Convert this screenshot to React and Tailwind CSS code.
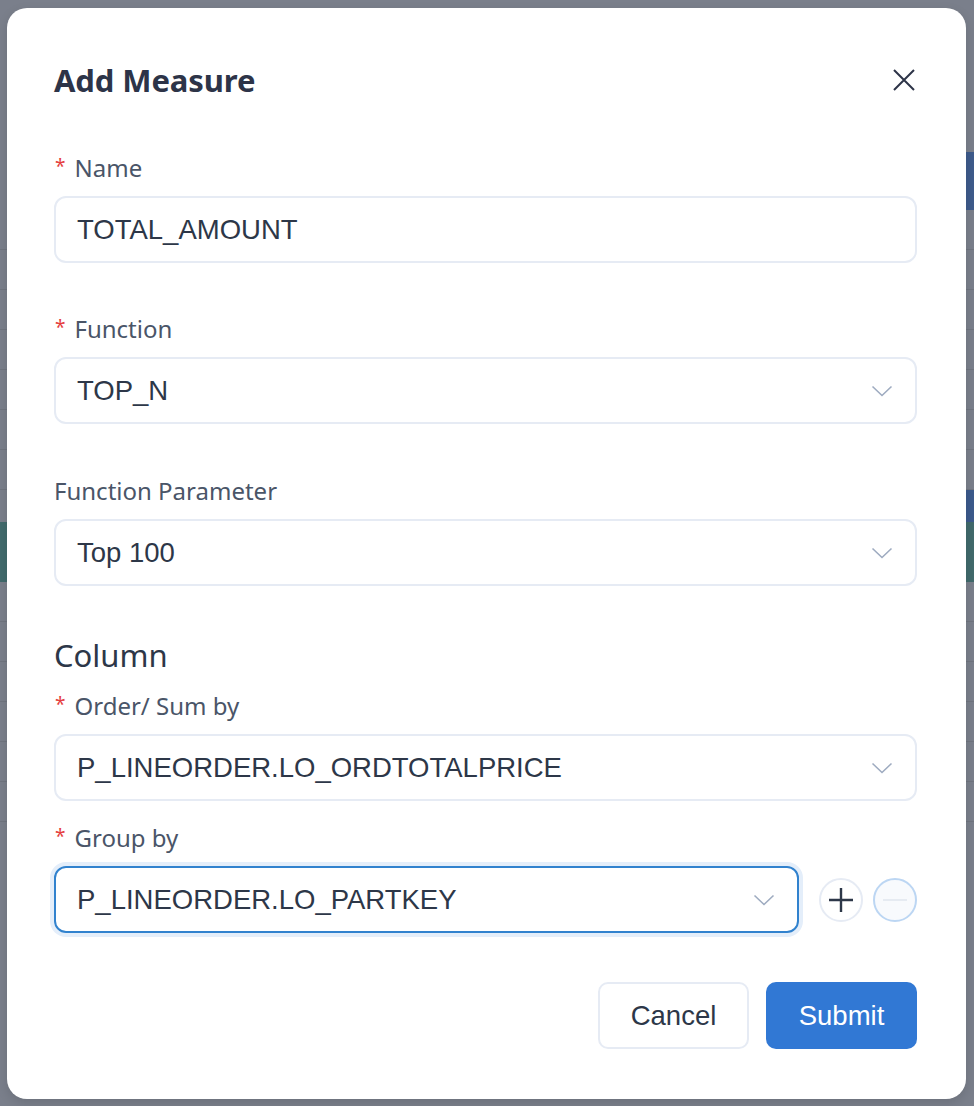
import React from "react";

const sans = { fontFamily: '"Noto Sans", "Open Sans", sans-serif' };
const arial = { fontFamily: '"Liberation Sans", Arial, sans-serif' };

const Chevron = () => (
    <svg width="22" height="12" viewBox="0 0 22 12" fill="none" className="shrink-0">
        <path d="M1.5 1.5 L11 10.5 L20.5 1.5" stroke="#9eabc0" strokeWidth="1.6"/>
    </svg>
);

const Label = ({children, required}) => (
    <div className="flex items-center h-9 mb-2.5 text-[24px] text-[#4a5568]" style={sans}>
        {required && <span className="text-[#e53e3e] text-[19px] mr-[9px] ml-px -mt-1">*</span>}
        <span>{children}</span>
    </div>
);

const Field = ({value, select, focused, className = ""}) => (
    <div
        className={`flex items-center h-[67px] rounded-[12px] pl-[21px] pr-[22px] text-[27.5px] text-[#2d3748] ${
            focused
                ? "border-2 border-[#3182ce] shadow-[0_0_0_4px_#e4eefa]"
                : "border-2 border-[#e6ebf4]"
        } ${className}`}
        style={arial}
    >
        <span className="flex-1">{value}</span>
        {select && <Chevron/>}
    </div>
);

export default function App() {
    return (
        <div className="relative w-[974px] h-[1106px] overflow-hidden bg-[#7a7f8b]">
            {/* dimmed page behind the overlay */}
            <div className="flex flex-col">
                <div className="h-[152px]"/>
                <div className="h-[58px] ml-[900px] bg-[#3e5b8b]"/>
                <div className="h-[40px] border-b border-[#70757f]"/>
                <div className="h-[40px] border-b border-[#70757f]"/>
                <div className="h-[40px] border-b border-[#70757f]"/>
                <div className="h-[40px] border-b border-[#70757f]"/>
                <div className="h-[40px] border-b border-[#70757f]"/>
                <div className="h-[40px] border-b border-[#70757f]"/>
                <div className="h-[40px] border-b border-[#70757f]"/>
                <div className="h-[32px] ml-[900px] bg-[#3c5a8c]"/>
                <div className="h-[60px] bg-[#416a6c]"/>
                <div className="h-[40px] border-b border-[#70757f]"/>
                <div className="h-[40px] border-b border-[#70757f]"/>
                <div className="h-[40px] border-b border-[#70757f]"/>
                <div className="h-[40px] border-b border-[#70757f]"/>
                <div className="h-[40px] border-b border-[#70757f]"/>
                <div className="h-[40px] border-b border-[#70757f]"/>
            </div>

            {/* modal */}
            <div className="absolute left-[7px] top-[8px] w-[959px] bg-white rounded-[20px] pl-[47px] pr-[49px] pt-[52px] pb-[50px] shadow-[0_4px_12px_rgba(0,0,0,0.12)]">
                <div className="flex items-center justify-between h-10">
                    <h2 className="text-[31px] font-bold text-[#2d3448] tracking-[-0.1px]" style={sans}>
                        Add Measure
                    </h2>
                    <svg width="22" height="22" viewBox="0 0 22 22" className="mr-[2px]">
                        <path d="M1 1 L21 21 M21 1 L1 21" stroke="#2d3448" strokeWidth="2"/>
                    </svg>
                </div>

                <div className="mt-[50px]">
                    <Label required>Name</Label>
                    <Field value="TOTAL_AMOUNT"/>
                </div>

                <div className="mt-[48px]">
                    <Label required>Function</Label>
                    <Field value="TOP_N" select/>
                </div>

                <div className="mt-[49px]">
                    <Label>Function Parameter</Label>
                    <Field value="Top 100" select/>
                </div>

                <div className="mt-[49px] h-10 flex items-center text-[31px] text-[#2d3748]" style={sans}>
                    Column
                </div>

                <div className="mt-[13px]">
                    <Label required>Order/ Sum by</Label>
                    <Field value="P_LINEORDER.LO_ORDTOTALPRICE" select/>
                </div>

                <div className="mt-[19px]">
                    <Label required>Group by</Label>
                    <div className="flex items-center">
                        <Field value="P_LINEORDER.LO_PARTKEY" select focused className="w-[746px]"/>
                        <button className="ml-5 w-[44px] h-[44px] rounded-full border-2 border-[#e6ebf4] flex items-center justify-center">
                            <svg width="26" height="26" viewBox="0 0 26 26">
                                <path d="M13 1 V25 M1 13 H25" stroke="#2d3748" strokeWidth="2.4"/>
                            </svg>
                        </button>
                        <button className="ml-[10px] w-[44px] h-[44px] rounded-full border-2 border-[#bcd6f3] bg-[#f8fafd] flex items-center justify-center">
                            <span className="block w-[24px] h-[2px] bg-[#e6ebf2]"/>
                        </button>
                    </div>
                </div>

                <div className="mt-[49px] flex justify-end gap-[17px] text-[27.5px]" style={arial}>
                    <button className="w-[151px] h-[67px] rounded-[10px] border-2 border-[#e6ebf4] text-[#2d3748]">
                        Cancel
                    </button>
                    <button className="w-[151px] h-[67px] rounded-[10px] bg-[#3178d4] text-white">
                        Submit
                    </button>
                </div>
            </div>
        </div>
    );
}
